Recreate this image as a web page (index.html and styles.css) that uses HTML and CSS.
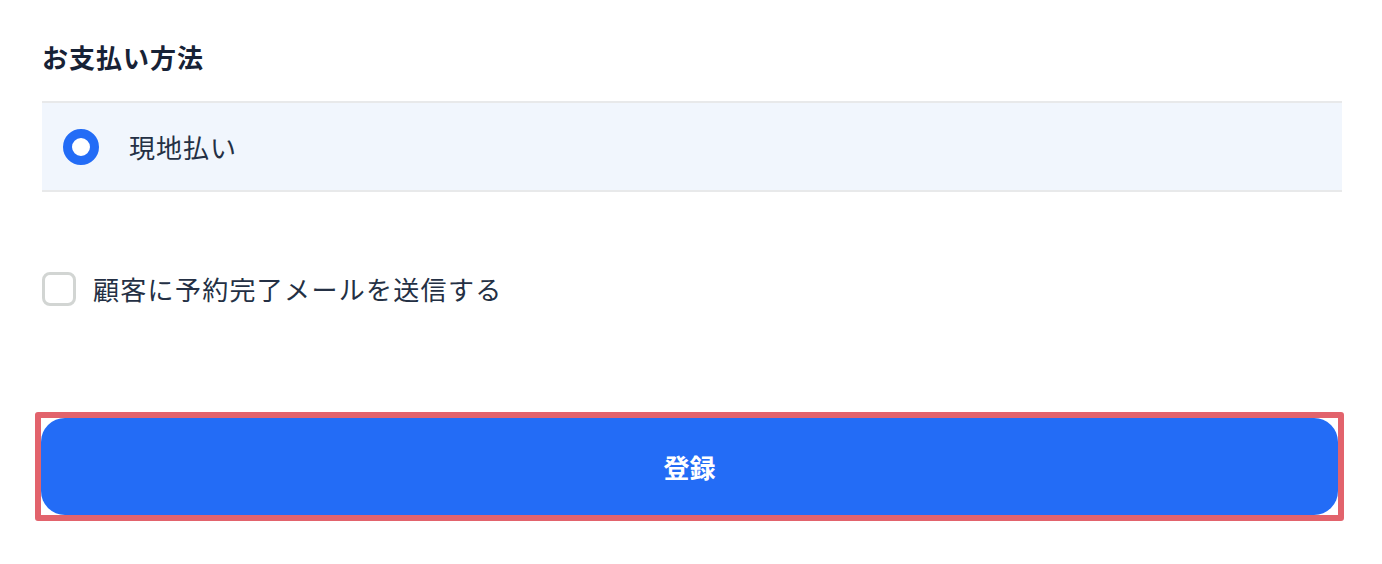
FILE: index.html
```html
<!DOCTYPE html>
<html lang="ja">
<head>
<meta charset="utf-8">
<link rel="stylesheet" href="styles.css">
</head>
<body>
<main class="form">
  <h2 class="section-title">お支払い方法</h2>
  <div class="pay-option">
    <span class="radio"></span>
    <span class="pay-label">現地払い</span>
  </div>
  <label class="check-row">
    <span class="checkbox"></span>
    <span class="check-label">顧客に予約完了メールを送信する</span>
  </label>
  <div class="highlight">
    <button class="submit">登録</button>
  </div>
</main>
</body>
</html>
```

FILE: styles.css
```css
html, body {
  margin: 0;
  padding: 0;
  background: #ffffff;
}
body {
  font-family: "Noto Sans CJK JP", "Noto Sans", sans-serif;
  color: #1f2a3c;
}
.form {
  display: flex;
  flex-direction: column;
  padding: 39px 40px 0 42px;
}
.section-title {
  margin: 0;
  font-size: 26px;
  font-weight: 700;
  line-height: 36px;
  letter-spacing: 1px;
  color: #172236;
}
.pay-option {
  margin-top: 26px;
  height: 87px;
  display: flex;
  align-items: center;
  gap: 30px;
  padding-left: 21px;
  background: #f1f6fd;
  border-top: 2px solid #e8e9ea;
  border-bottom: 2px solid #e8e9ea;
}
.radio {
  width: 18px;
  height: 18px;
  border-radius: 50%;
  border: 9px solid #236cf6;
  background: #ffffff;
  flex: none;
}
.pay-label {
  font-size: 26px;
  line-height: 36px;
  letter-spacing: 1px;
  color: #243044;
}
.check-row {
  margin-top: 79px;
  display: flex;
  align-items: center;
  gap: 17px;
}
.checkbox {
  width: 28px;
  height: 28px;
  border: 3px solid #d2d5d3;
  border-radius: 8px;
  background: #fff;
  flex: none;
}
.check-label {
  font-size: 26px;
  line-height: 36px;
  letter-spacing: 1.3px;
  color: #243044;
}
.highlight {
  margin-top: 105px;
  margin-left: -7px;
  margin-right: -2px;
  border: 6px solid #e2636c;
  border-radius: 3px;
  display: flex;
}
.submit {
  flex: 1;
  height: 97px;
  border: none;
  border-radius: 24px;
  background: #236cf6;
  color: #ffffff;
  font-family: "Noto Sans CJK JP", "Noto Sans", sans-serif;
  font-size: 26px;
  font-weight: 700;
  cursor: pointer;
}
```
